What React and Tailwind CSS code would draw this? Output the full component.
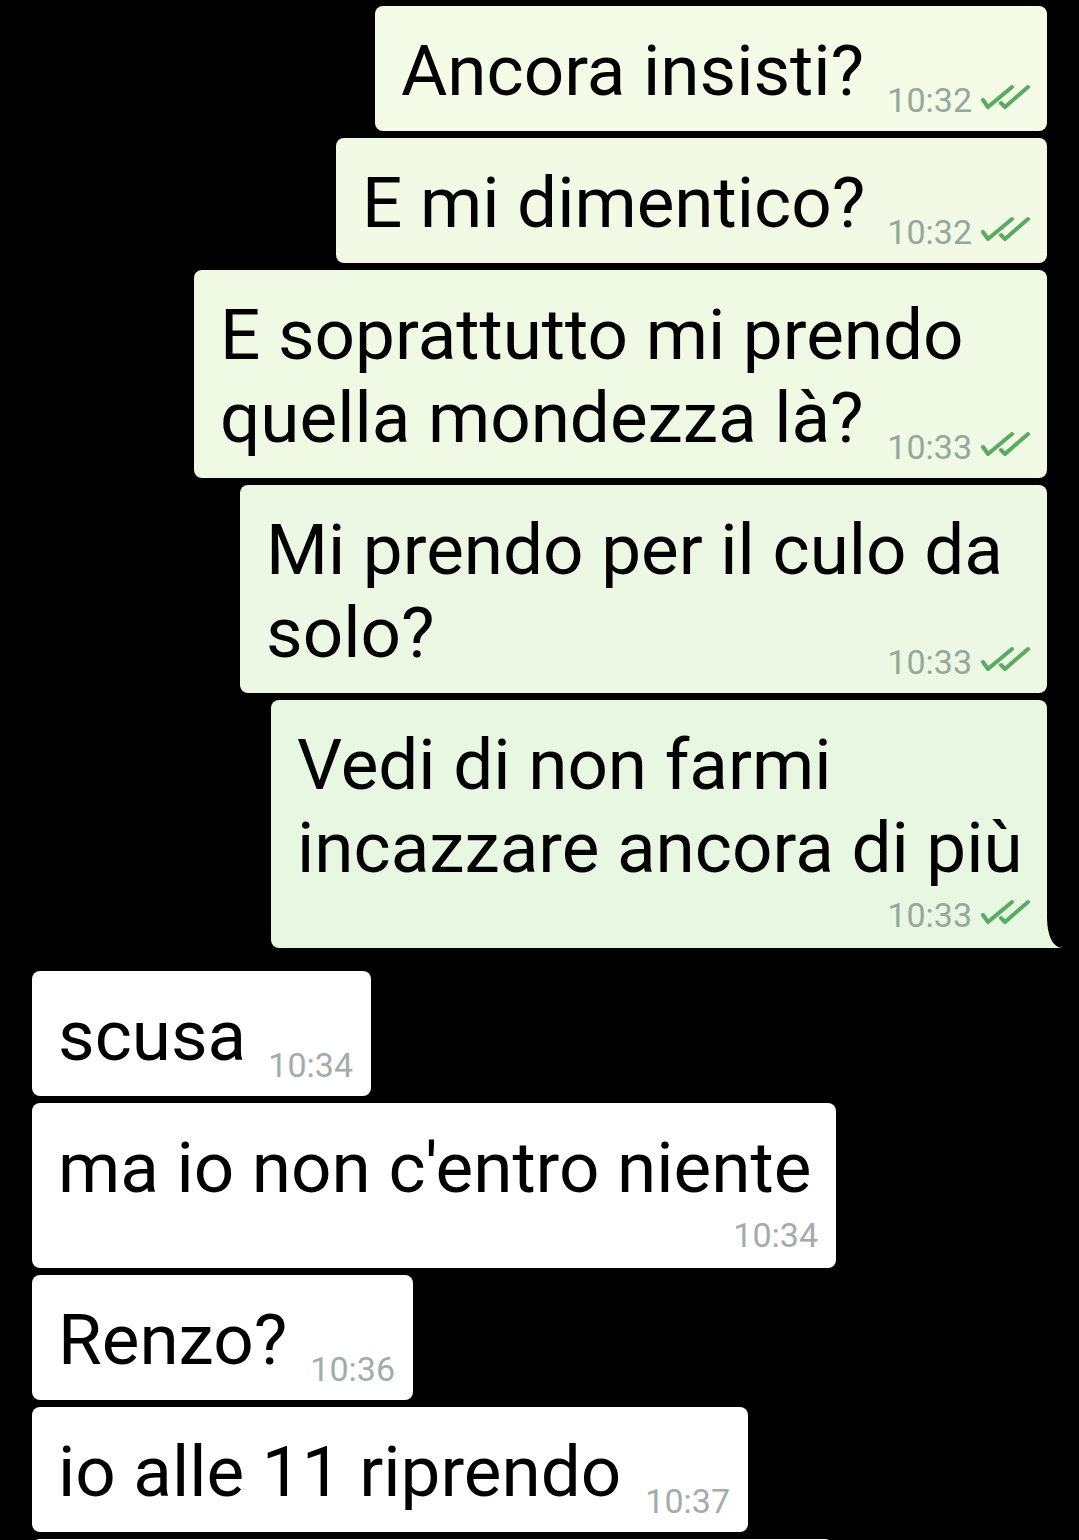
import React from "react";

function Checks() {
  return (
    <svg width="50" height="28" viewBox="0 0 50 28" className="ml-[8px] mb-[5px] shrink-0">
      <path d="M3 16 L8 23 L32 3" fill="none" stroke="#58ab61" strokeWidth="4" strokeLinecap="round" strokeLinejoin="round" />
      <path d="M21 19 L25 23 L48 3" fill="none" stroke="#58ab61" strokeWidth="4" strokeLinecap="round" strokeLinejoin="round" />
    </svg>
  );
}

function Time({ t, out, mb }) {
  return (
    <div className={`flex items-end shrink-0 ${mb}`}>
      <span className={`text-[34px] leading-none ${out ? "text-[#94a89b]" : "text-[#a3acac]"}`}>{t}</span>
      {out && <Checks />}
    </div>
  );
}

function Bubble({ m, out }) {
  const last = m.lines[m.lines.length - 1];
  const rest = m.lines.slice(0, -1);
  return (
    <div
      className={`relative ${m.w} ${m.bg} ${m.tail ? "rounded-[8px] rounded-br-none" : "rounded-[8px]"} pt-[23px] pb-[19px] ${out ? "pl-[26px] pr-[17px]" : "pl-[26px] pr-[18px]"}`}
    >
      {rest.map((l, i) => (
        <div key={i} className="text-[71px] leading-[83px] whitespace-nowrap text-black">
          {l}
        </div>
      ))}
      {m.mode === "inline" ? (
        <div className="flex items-end justify-between">
          <span className="text-[71px] leading-[83px] whitespace-nowrap text-black">{last}</span>
          <Time t={m.time} out={out} mb="-mb-[5px]" />
        </div>
      ) : (
        <>
          <div className="text-[71px] leading-[83px] whitespace-nowrap text-black">{last}</div>
          <div className="flex h-[40px] items-end justify-end">
            <Time t={m.time} out={out} mb="-mb-[3px]" />
          </div>
        </>
      )}
      {m.tail && (
        <svg width="16" height="44" viewBox="0 0 16 44" className="absolute left-full bottom-0">
          <path d="M0 12 C0 32 6 44 16 44 L0 44 Z" fill="#e8f7e2" />
        </svg>
      )}
    </div>
  );
}

const outgoing = [
  { w: "w-[672px]", bg: "bg-[#f4fbe6]", lines: ["Ancora insisti?"], time: "10:32", mode: "inline" },
  { w: "w-[711px]", bg: "bg-[#f2fae5]", lines: ["E mi dimentico?"], time: "10:32", mode: "inline" },
  { w: "w-[853px]", bg: "bg-[#eff9e4]", lines: ["E soprattutto mi prendo", "quella mondezza là?"], time: "10:33", mode: "inline" },
  { w: "w-[807px]", bg: "bg-[#ecf8e3]", lines: ["Mi prendo per il culo da", "solo?"], time: "10:33", mode: "inline" },
  { w: "w-[776px]", bg: "bg-[#e8f7e2]", lines: ["Vedi di non farmi", "incazzare ancora di più"], time: "10:33", mode: "own", tail: true },
];

const incoming = [
  { w: "w-[339px]", bg: "bg-white", lines: ["scusa"], time: "10:34", mode: "inline" },
  { w: "w-[804px]", bg: "bg-white", lines: ["ma io non c'entro niente"], time: "10:34", mode: "own" },
  { w: "w-[381px]", bg: "bg-white", lines: ["Renzo?"], time: "10:36", mode: "inline" },
  { w: "w-[716px]", bg: "bg-white", lines: ["io alle 11 riprendo"], time: "10:37", mode: "inline" },
];

export default function App() {
  return (
    <div className="w-[1079px] h-[1540px] overflow-hidden bg-black font-['Roboto',sans-serif]">
      <div className="flex flex-col items-end gap-[7px] pt-[6px] pr-[32px]">
        {outgoing.map((m, i) => (
          <Bubble key={i} m={m} out />
        ))}
      </div>
      <div className="flex flex-col items-start gap-[7px] mt-[23px] pl-[32px]">
        {incoming.map((m, i) => (
          <Bubble key={i} m={m} out={false} />
        ))}
        <div className="w-[801px] h-[8px] bg-white rounded-t-[8px]" />
      </div>
    </div>
  );
}
